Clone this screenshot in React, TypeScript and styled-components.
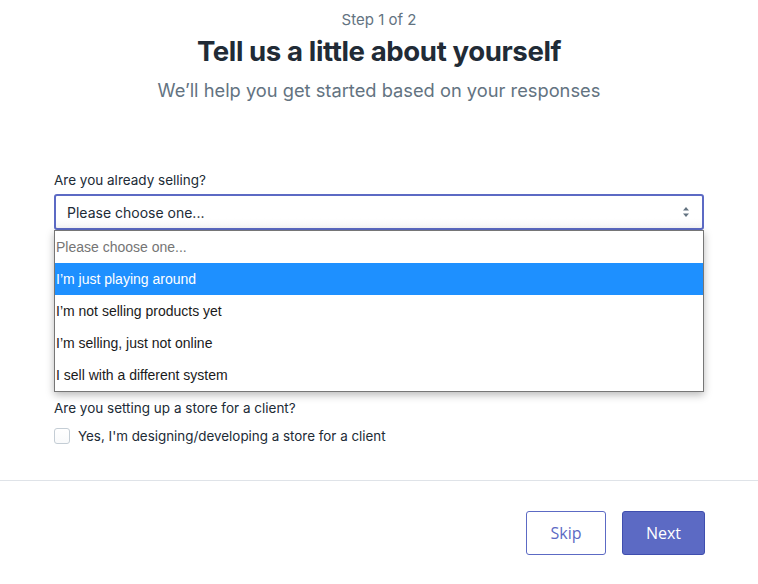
import React from 'react';
import styled, { createGlobalStyle } from 'styled-components';

const GlobalStyle = createGlobalStyle`
  html, body {
    margin: 0;
    padding: 0;
    background: #fff;
  }
  body {
    font-family: Inter, "Noto Sans", sans-serif;
    color: #212b36;
  }
`;

const Page = styled.div`
  width: 758px;
  height: 584px;
  display: flex;
  flex-direction: column;
  overflow: hidden;
`;

const Header = styled.header`
  display: flex;
  flex-direction: column;
  align-items: center;
  padding-top: 10px;
`;

const Step = styled.div`
  font-family: Inter, sans-serif;
  font-size: 15px;
  line-height: 20px;
  color: #637381;
`;

const Title = styled.h1`
  margin: 3px 0 0;
  font-family: Inter, sans-serif;
  font-size: 27.6px;
  line-height: 36px;
  font-weight: 700;
  letter-spacing: -0.4px;
  color: #212b36;
`;

const Subtitle = styled.p`
  margin: 8px 0 0;
  font-family: Inter, sans-serif;
  font-size: 18.3px;
  line-height: 26px;
  color: #637381;
`;

const Form = styled.div`
  width: 650px;
  margin: 68px auto 0;
  display: flex;
  flex-direction: column;
`;

const Field = styled.div`
  position: relative;
  display: flex;
  flex-direction: column;
`;

const Label = styled.label`
  font-family: Inter, sans-serif;
  font-size: 13.5px;
  line-height: 18px;
  color: #212b36;
  margin-bottom: 5px;
`;

const SelectBox = styled.div`
  height: 36px;
  box-sizing: border-box;
  border: 2px solid #5c6ac4;
  border-radius: 3px;
  display: flex;
  align-items: center;
  justify-content: space-between;
  padding: 0 12px 0 11px;
  font-family: Inter, sans-serif;
  font-size: 14px;
  color: #212b36;
  background: linear-gradient(#fff 70%, #f6f6f7);
`;

const Arrows = styled.svg`
  width: 8px;
  height: 12px;
  fill: #637381;
`;

const Listbox = styled.ul`
  position: absolute;
  top: 100%;
  left: 0;
  right: 0;
  margin: 0;
  padding: 0;
  list-style: none;
  background: #fff;
  border: 1px solid #767676;
  box-shadow: 0 3px 8px rgba(0, 0, 0, 0.28);
  z-index: 2;
`;

const Option = styled.li<{ active?: boolean; placeholder?: boolean }>`
  height: 32px;
  display: flex;
  align-items: center;
  padding-left: 1px;
  font-family: "Liberation Sans", Arial, sans-serif;
  font-size: 14px;
  color: ${({ active, placeholder }) => (active ? '#fff' : placeholder ? '#757575' : '#1a1a1a')};
  background: ${({ active }) => (active ? '#1e90ff' : '#fff')};
`;

const Spacer = styled.div`
  height: 169px;
`;

const CheckRow = styled.label`
  display: flex;
  align-items: center;
  gap: 8px;
  height: 18px;
  margin-top: 5px;
  font-family: Inter, sans-serif;
  font-size: 13.4px;
  color: #212b36;
`;

const Box = styled.span`
  width: 16px;
  height: 16px;
  box-sizing: border-box;
  border: 1px solid #c4cdd5;
  border-radius: 3px;
  background: linear-gradient(#fff, #f9fafb);
`;

const Divider = styled.hr`
  margin: 35px 0 0;
  border: 0;
  border-top: 1px solid #dfe3e8;
`;

const Footer = styled.div`
  display: flex;
  justify-content: flex-end;
  gap: 16px;
  padding: 30px 53px 0 0;
`;

const Button = styled.button<{ primary?: boolean }>`
  height: 44px;
  min-width: ${({ primary }) => (primary ? 83 : 80)}px;
  box-sizing: border-box;
  border-radius: 3px;
  border: 1px solid ${({ primary }) => (primary ? '#3f4eae' : '#5c6ac4')};
  background: ${({ primary }) => (primary ? '#5c6ac4' : '#fff')};
  color: ${({ primary }) => (primary ? '#fff' : '#5c6ac4')};
  font-family: "Open Sans", "Noto Sans", sans-serif;
  font-size: 16px;
  padding: 0 20px;
`;

const options = [
  'I\u2019m just playing around',
  'I\u2019m not selling products yet',
  'I\u2019m selling, just not online',
  'I sell with a different system',
];

export default function App() {
  return (
    <Page>
      <GlobalStyle />
      <Header>
        <Step>Step 1 of 2</Step>
        <Title>Tell us a little about yourself</Title>
        <Subtitle>We’ll help you get started based on your responses</Subtitle>
      </Header>

      <Form>
        <Label>Are you already selling?</Label>
        <Field>
          <SelectBox>
            <span>Please choose one...</span>
            <Arrows viewBox="0 0 8 12">
              <path d="M4 1 L7 4.5 H1 Z" />
              <path d="M4 11 L7 7.5 H1 Z" />
            </Arrows>
          </SelectBox>
          <Listbox>
            <Option placeholder>Please choose one...</Option>
            {options.map((o, i) => (
              <Option key={o} active={i === 0}>
                {o}
              </Option>
            ))}
          </Listbox>
        </Field>
        <Spacer />
        <Label>Are you setting up a store for a client?</Label>
        <CheckRow>
          <Box />
          Yes, I'm designing/developing a store for a client
        </CheckRow>
      </Form>

      <Divider />
      <Footer>
        <Button>Skip</Button>
        <Button primary>Next</Button>
      </Footer>
    </Page>
  );
}
